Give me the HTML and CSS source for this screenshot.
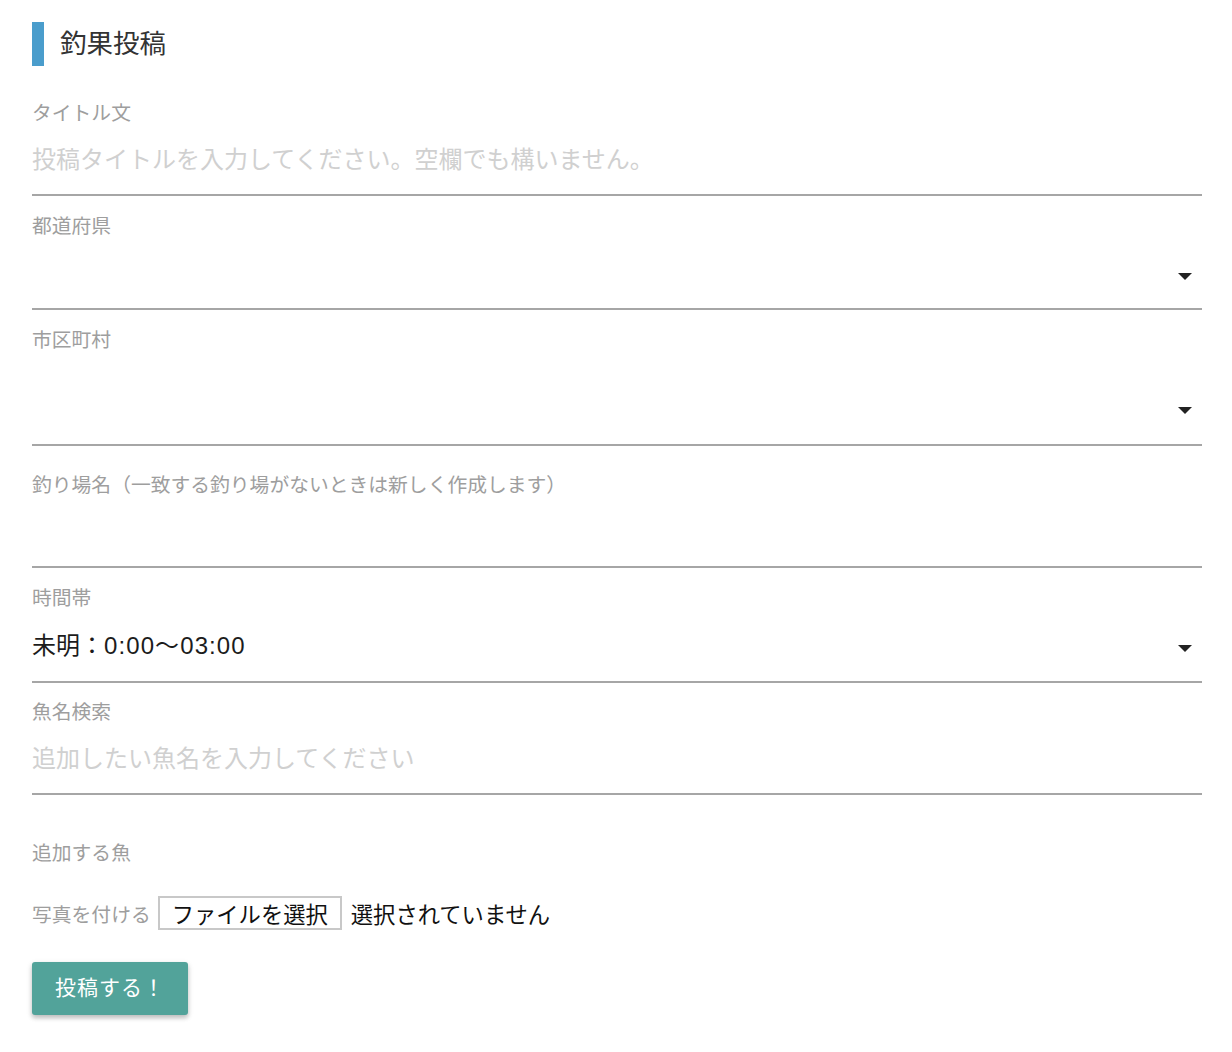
FILE: index.html
```html
<!DOCTYPE html>
<html lang="ja">
<head>
<meta charset="utf-8">
<title>釣果投稿</title>
<link rel="stylesheet" href="styles.css">
</head>
<body>
<main class="page">
  <h1 class="heading"><span class="bar"></span><span class="heading-text">釣果投稿</span></h1>

  <div class="field f1">
    <div class="label">タイトル文</div>
    <div class="control h70"><span class="placeholder">投稿タイトルを入力してください。空欄でも構いません。</span></div>
  </div>

  <div class="field f2">
    <div class="label">都道府県</div>
    <div class="control select h71"><span class="arrow a39"></span></div>
  </div>

  <div class="field f3">
    <div class="label">市区町村</div>
    <div class="control select h93"><span class="arrow a59"></span></div>
  </div>

  <div class="field f4">
    <div class="label">釣り場名（一致する釣り場がないときは新しく作成します）</div>
    <div class="control h70"></div>
  </div>

  <div class="field f5">
    <div class="label">時間帯</div>
    <div class="control select h72"><span class="value">未明：<span class="digits">0:00〜03:00</span></span><span class="arrow a39"></span></div>
  </div>

  <div class="field f6">
    <div class="label">魚名検索</div>
    <div class="control h70"><span class="placeholder">追加したい魚名を入力してください</span></div>
  </div>

  <div class="fish-label">追加する魚</div>

  <div class="file-row">
    <span class="file-label">写真を付ける</span>
    <span class="file-btn">ファイルを選択</span>
    <span class="file-status">選択されていません</span>
  </div>

  <button class="submit">投稿する！</button>
</main>
</body>
</html>
```

FILE: styles.css
```css
* { box-sizing: border-box; }
html, body { margin: 0; padding: 0; background: #ffffff; }
body {
  font-family: "Liberation Sans", "Noto Sans CJK JP", "Noto Sans", sans-serif;
  color: #222;
}
.page {
  padding: 22px 30px 40px 32px;
}
.heading {
  margin: 0;
  display: flex;
  align-items: center;
  height: 44px;
  font-weight: 400;
}
.bar {
  width: 12px;
  height: 44px;
  background: #4a9dcc;
  margin-right: 16px;
}
.heading-text {
  font-size: 26.5px;
  color: #333;
  line-height: 44px;
}
.field { display: block; }
.f1 { margin-top: 34px; }
.f2 { margin-top: 17px; }
.f3 { margin-top: 17px; }
.f4 { margin-top: 26px; }
.f5 { margin-top: 17px; }
.f6 { margin-top: 16px; }
.label {
  font-size: 19.8px;
  line-height: 26px;
  color: #9e9e9e;
  height: 26px;
  white-space: nowrap;
}
.control {
  position: relative;
  display: flex;
  align-items: center;
  border-bottom: 2px solid #a6a6a6;
  font-size: 24px;
}
.h70 { height: 70px; }
.h71 { height: 71px; }
.h72 { height: 72px; }
.h93 { height: 93px; }
.placeholder { color: #d0d0d0; line-height: 30px; }
.value { color: #1c1c1c; line-height: 30px; }
.digits { letter-spacing: 1.1px; }
.arrow {
  position: absolute;
  right: 10px;
  width: 0;
  height: 0;
  border-left: 7px solid transparent;
  border-right: 7px solid transparent;
  border-top: 7px solid #222;
}
.a39 { top: 34px; }
.a59 { top: 54px; }
.fish-label {
  margin-top: 46px;
  font-size: 19.8px;
  line-height: 24px;
  color: #9e9e9e;
}
.file-row {
  margin-top: 31px;
  display: flex;
  align-items: center;
  height: 34px;
}
.file-label {
  font-size: 19.8px;
  color: #9e9e9e;
  margin-right: 7px;
}
.file-btn {
  display: inline-flex;
  align-items: center;
  height: 34px;
  padding: 0 12px 0 12px;
  border: 2px solid #c8c8c8;
  font-size: 22.3px;
  color: #111;
  background: #fff;
  margin-right: 9px;
}
.file-status {
  font-size: 22.3px;
  color: #111;
}
.submit {
  margin-top: 32px;
  display: block;
  width: 156px;
  height: 53px;
  border: none;
  border-radius: 3px;
  background: #52a39a;
  color: #fff;
  font-family: "Liberation Sans", "Noto Sans CJK JP", sans-serif;
  font-size: 21px;
  letter-spacing: 1px;
  box-shadow: 0 3px 4px rgba(0,0,0,0.18), 0 2px 6px rgba(0,0,0,0.12);
  padding: 0 0 5px 0;
}
```
